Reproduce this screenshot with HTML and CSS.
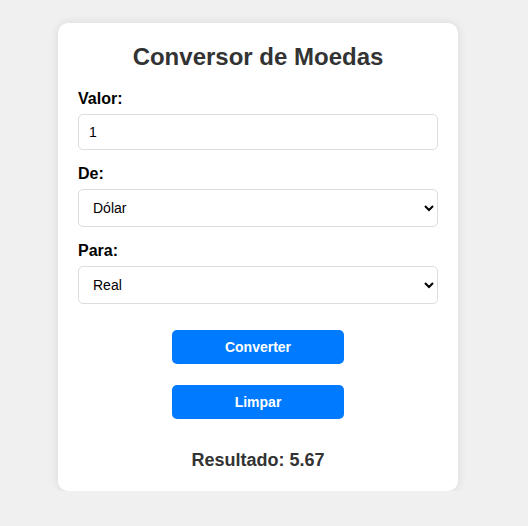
FILE: index.html
```html
<!DOCTYPE html>
<html lang="pt-BR">
<head>
<meta charset="UTF-8">
<title>Conversor de Moedas</title>
<link rel="stylesheet" href="styles.css">
</head>
<body>
  <div class="container">
    <h2 class="title">Conversor de Moedas</h2>
    <label class="label" for="valor">Valor:</label>
    <input class="field field-input" id="valor" type="number" value="1">
    <label class="label" for="de">De:</label>
    <select class="field field-select" id="de">
      <option selected>Dólar</option>
      <option>Real</option>
      <option>Euro</option>
    </select>
    <label class="label" for="para">Para:</label>
    <select class="field field-select" id="para">
      <option>Dólar</option>
      <option selected>Real</option>
      <option>Euro</option>
    </select>
    <div class="actions">
      <button class="btn" type="button">Converter</button>
      <button class="btn" type="button">Limpar</button>
    </div>
    <p class="result">Resultado: 5.67</p>
  </div>
</body>
</html>
```
FILE: styles.css
```css
html, body {
  margin: 0;
  padding: 0;
}
body {
  background: #f0f0f0;
  font-family: "Liberation Sans", Arial, sans-serif;
  padding-top: 23px;
  padding-left: 58px;
}
.container {
  box-sizing: border-box;
  width: 400px;
  background: #fff;
  border-radius: 10px;
  padding: 20px;
  box-shadow: 0 0 10px rgba(0, 0, 0, 0.1);
}
.title {
  margin: 0 0 20px;
  text-align: center;
  font-size: 24px;
  font-weight: bold;
  color: #333;
  line-height: 27px;
}
.label {
  display: block;
  font-size: 16px;
  font-weight: bold;
  color: #000;
  margin-bottom: 6px;
  line-height: 18px;
}
.field {
  display: block;
  box-sizing: border-box;
  width: 100%;
  margin: 0 0 15px;
  border: 1px solid #ddd;
  border-radius: 5px;
  background: #fff;
  font-family: "Liberation Sans", Arial, sans-serif;
  font-size: 14px;
  color: #000;
  padding: 0 10px;
}
.field-input {
  height: 36px;
  outline: none;
}
.field-input::-webkit-inner-spin-button,
.field-input::-webkit-outer-spin-button {
  -webkit-appearance: none;
  margin: 0;
}
.field-select {
  height: 38px;
}
.actions {
  display: flex;
  flex-direction: column;
  align-items: center;
  gap: 21px;
  margin-top: 26px;
}
.btn {
  width: 172px;
  height: 34px;
  border: none;
  border-radius: 5px;
  background: #007bff;
  color: #fff;
  font-family: "Liberation Sans", Arial, sans-serif;
  font-size: 14px;
  font-weight: bold;
  cursor: pointer;
}
.result {
  margin: 31px 0 0;
  text-align: center;
  font-size: 18px;
  font-weight: bold;
  color: #333;
  line-height: 21px;
}
```
